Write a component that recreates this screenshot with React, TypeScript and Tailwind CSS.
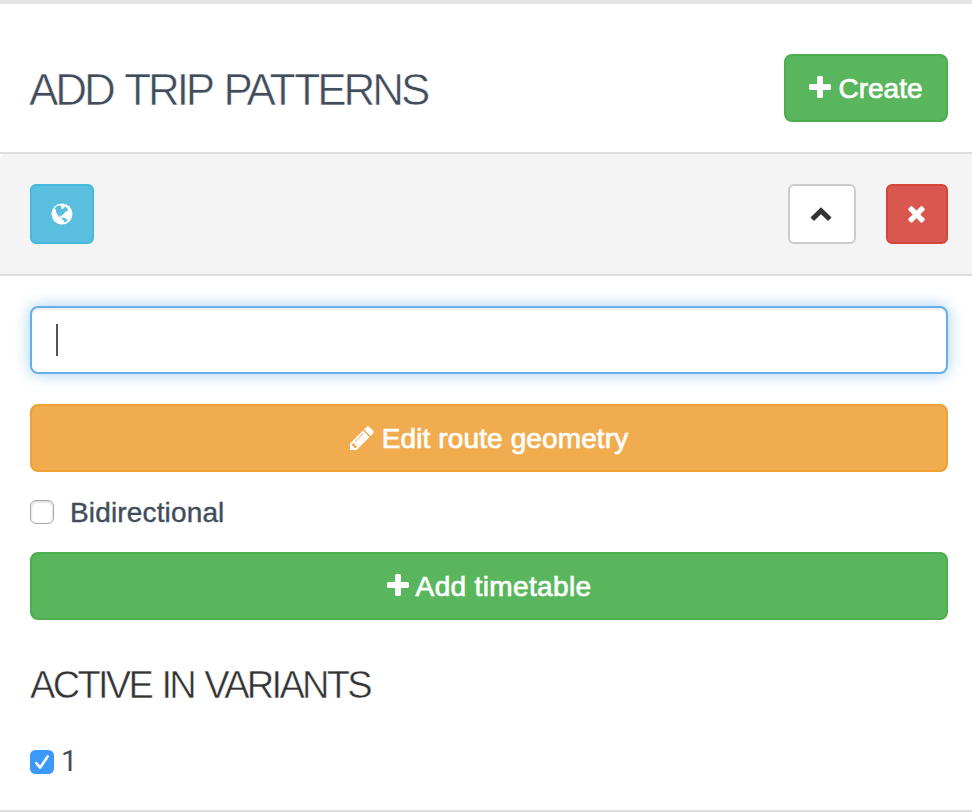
import React from "react";

const sans = "font-['Liberation_Sans',Arial,sans-serif]";

function Icon({ d, size, className = "" }: { d: string; size: number; className?: string }) {
  return (
    <svg width={size} height={size} viewBox="0 0 1792 1792" fill="currentColor" className={`shrink-0 ${className}`} aria-hidden="true">
      <path d={d} />
    </svg>
  );
}

const PLUS =
  "M1600 736v192q0 40-28 68t-68 28h-416v416q0 40-28 68t-68 28h-192q-40 0-68-28t-28-68v-416h-416q-40 0-68-28t-28-68v-192q0-40 28-68t68-28h416v-416q0-40 28-68t68-28h192q40 0 68 28t28 68v416h416q40 0 68 28t28 68z";
const TIMES =
  "M1490 1322q0 40-28 68l-136 136q-28 28-68 28t-68-28l-294-294-294 294q-28 28-68 28t-68-28l-136-136q-28-28-28-68t28-68l294-294-294-294q-28-28-28-68t28-68l136-136q28-28 68-28t68 28l294 294 294-294q28-28 68-28t68 28l136 136q28 28 28 68t-28 68l-294 294 294 294q28 28 28 68z";
const PENCIL =
  "M491 1536l91-91-235-235-91 91v107h128v128h107zm523-928q0-22-22-22-10 0-17 7l-542 542q-7 7-7 17 0 22 22 22 10 0 17-7l542-542q7-7 7-17zm-54-192l416 416-832 832h-416v-416zm683 96q0 53-37 90l-166 166-416-416 166-165q36-38 90-38 53 0 91 38l235 234q37 39 37 91z";

function Globe() {
  return (
    <svg width="22" height="22" viewBox="0 0 22 22" className="mb-px shrink-0" aria-hidden="true">
      <circle cx="11" cy="11" r="10.5" fill="#fff" />
      <path
        fill="#5abfde"
        d="M3.6 5.4 5.6 3.2 9 2.2l1.7 1.4-.7 1.7 2 .8 1-1.7 1.6-.6 2.3 2.2-.2 2-2.2.7-1.7 2.3-1.8 1-.5 1.4-1-1-1.5.4 1.4 1.7 1.4.3-.2.6L8 13.9 5.3 9.8 4.8 6.8z M10.7 15.1l2.4-.3 3.5 1.7-1 2-2.8 1.1.2-2.1-2-.9z"
      />
    </svg>
  );
}

function ChevronUp() {
  return (
    <svg width="22" height="15" viewBox="0 0 22 15" className="mt-px mr-[2px] shrink-0" aria-hidden="true">
      <path d="M2.2 12.3 11 3.7 19.8 12.3" fill="none" stroke="#333" strokeWidth="5" strokeLinejoin="miter" />
    </svg>
  );
}

export default function App() {
  return (
    <main className={`h-[812px] w-[972px] overflow-hidden border-t-4 border-[#e4e4e4] bg-white text-[28px] text-[#414d5b] ${sans}`}>
      <header className="flex h-[148px] items-start justify-between pt-[50px] pr-6 pl-[29px]">
        <h1 className="mt-[10px] text-[44px] leading-[52px] font-normal tracking-[-3.05px] whitespace-nowrap [word-spacing:3px] [-webkit-text-stroke:0.6px_white]">ADD TRIP PATTERNS</h1>
        <button className="flex h-[68px] w-[164px] items-center justify-center gap-[7px] rounded-lg border-2 border-[#4cae4c] bg-[#5ab65d] text-white">
          <Icon d={PLUS} size={28} className="-mx-[3px]" />
          <span className="mt-[2px] [-webkit-text-stroke:0.7px_white]">Create</span>
        </button>
      </header>
      <section className="h-[660px] border-y-2 border-[#ddd]">
        <div className="flex h-[122px] items-center justify-between rounded-tl-md border-b-2 border-[#ddd] bg-[#f4f4f4] pr-6 pl-[30px]">
          <button className="flex h-[60px] w-16 items-center justify-center rounded-md border-2 border-[#46b8da] bg-[#5abfde]">
            <Globe />
          </button>
          <div className="flex gap-[30px]">
            <button className="flex h-[60px] w-[68px] items-center justify-center rounded-md border-2 border-[#ccc] bg-white">
              <ChevronUp />
            </button>
            <button className="flex h-[60px] w-[62px] items-center justify-center rounded-md border-2 border-[#d4463a] bg-[#da574f] text-white">
              <Icon d={TIMES} size={25} className="mr-px mb-[2px]" />
            </button>
          </div>
        </div>
        <div className="pt-[30px] pr-6 pl-[30px]">
          <div className="flex h-[68px] items-center rounded-lg border-2 border-[#66afe9] bg-white pl-6 shadow-[inset_0_2px_2px_rgba(0,0,0,0.075),0_0_16px_rgba(102,175,233,0.6)]">
            <span className="h-8 w-[2px] bg-[#555]" />
          </div>
          <button className="mt-[30px] flex h-[68px] w-full items-center justify-center gap-[8px] rounded-lg border-2 border-[#eea236] bg-[#f0ac4f] tracking-[0.12px] text-white">
            <Icon d={PENCIL} size={28} className="-mx-[2px]" />
            <span className="mt-[2px] [-webkit-text-stroke:0.7px_white]">Edit route geometry</span>
          </button>
          <div className="mt-5 flex h-10 items-center gap-4">
            <span className="size-6 rounded-[6px] border border-[#a9a9a9] bg-white shadow-[inset_0_1px_3px_rgba(0,0,0,0.2)]" />
            <span className="mt-[2px] tracking-[0.15px] [-webkit-text-stroke:0.4px_#414d5b]">Bidirectional</span>
          </div>
          <button className="mt-5 flex h-[68px] w-full items-center justify-center gap-[7px] rounded-lg border-2 border-[#4cae4c] bg-[#5ab65d] tracking-[0.35px] text-white">
            <Icon d={PLUS} size={28} className="-mx-[3px]" />
            <span className="mt-[2px] [-webkit-text-stroke:0.7px_white]">Add timetable</span>
          </button>
          <h2 className="mt-[43px] text-[38px] leading-[44px] font-normal tracking-[-2.7px] whitespace-nowrap text-[#333] [word-spacing:2.5px] [-webkit-text-stroke:0.5px_white]">ACTIVE IN VARIANTS</h2>
          <div className="mt-[34px] flex h-10 items-center gap-[7px]">
            <svg width="24" height="24" viewBox="0 0 24 24" className="mt-[2px]" aria-hidden="true">
              <rect width="24" height="24" rx="5.5" fill="#3b99fc" />
              <path d="M6.3 13.2 10.2 17.6 17.7 6.4" fill="none" stroke="#fff" strokeWidth="2.6" strokeLinecap="round" strokeLinejoin="round" />
            </svg>
            <span className="-mt-px font-[Roboto,sans-serif] text-[29px] leading-10">1</span>
          </div>
        </div>
      </section>
    </main>
  );
}
